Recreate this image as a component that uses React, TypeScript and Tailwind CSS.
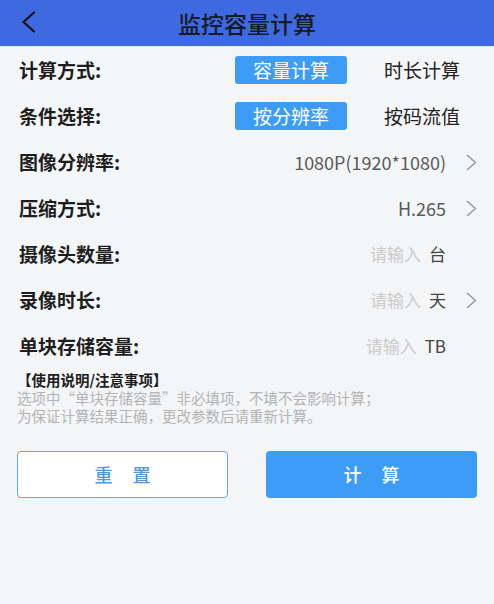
import React from "react";

const Chevron = () => (
  <svg width="11" height="17" viewBox="0 0 11 17" fill="none">
    <path d="M1.5 1.5 L9.5 8.5 L1.5 15.5" stroke="#9a9a9a" strokeWidth="1.6" strokeLinecap="round" strokeLinejoin="round" />
  </svg>
);

const Row = ({ label, children }: { label: string; children: React.ReactNode }) => (
  <div className="flex h-[46px] items-center justify-between pl-[19px] pr-[17px]">
    <span className="text-[19px] font-bold text-[#1e1e1e]">{label}</span>
    <div className="flex items-center">{children}</div>
  </div>
);

const Value = ({ text, arrow }: { text: string; arrow: boolean }) => (
  <>
    <span className="text-[18px] text-[#5a5a5a]">{text}</span>
    <span className="ml-[20px] flex w-[11px] items-center">{arrow ? <Chevron /> : null}</span>
  </>
);

const InputVal = ({ unit, arrow }: { unit: string; arrow: boolean }) => (
  <>
    <span className="text-[17px] text-[#cbcbcb]">请输入</span>
    <span className="ml-[8px] text-[17px] text-[#444]">{unit}</span>
    <span className="ml-[20px] flex w-[11px] items-center">{arrow ? <Chevron /> : null}</span>
  </>
);

const Toggle = ({ a, b }: { a: string; b: string }) => (
  <div className="flex items-center gap-[19px] -mr-[1px]">
    <div className="flex h-[28px] w-[112px] items-center justify-center rounded-[3px] bg-[#3c9cf6] text-[19px] text-white">
      {a}
    </div>
    <div className="flex h-[28px] w-[112px] items-center justify-center text-[19px] text-[#222]">{b}</div>
  </div>
);

export default function App() {
  return (
    <div
      className="min-h-[604px] w-[494px] bg-[#f3f5f7]"
      style={{ fontFamily: '"Noto Sans CJK SC", "Noto Sans", sans-serif' }}
    >
      <div className="relative flex h-[46px] items-center justify-center bg-[#3f69de]">
        <svg className="absolute left-[21px] top-[11px]" width="16" height="22" viewBox="0 0 16 22" fill="none">
          <path d="M13 1.5 L2.5 11 L13 20.5" stroke="#111" strokeWidth="2.2" strokeLinecap="round" strokeLinejoin="round" />
        </svg>
        <span className="text-[23px] font-medium text-[#141a2a]">监控容量计算</span>
      </div>
      <div className="border-t border-[#dfe6f6] h-0" />
      <div className="flex flex-col">
        <Row label="计算方式:">
          <Toggle a="容量计算" b="时长计算" />
        </Row>
        <Row label="条件选择:">
          <Toggle a="按分辨率" b="按码流值" />
        </Row>
        <Row label="图像分辨率:">
          <Value text="1080P(1920*1080)" arrow />
        </Row>
        <Row label="压缩方式:">
          <Value text="H.265" arrow />
        </Row>
        <Row label="摄像头数量:">
          <InputVal unit="台" arrow={false} />
        </Row>
        <Row label="录像时长:">
          <InputVal unit="天" arrow />
        </Row>
        <Row label="单块存储容量:">
          <InputVal unit="TB" arrow={false} />
        </Row>
      </div>
      <div className="mt-[2px] px-[17px] text-[14.5px] leading-[18px]">
        <div className="font-bold text-[#1e1e1e]">【使用说明/注意事项】</div>
        <div className="text-[#b4b4b4]">选项中“单块存储容量”非必填项，不填不会影响计算；</div>
        <div className="text-[#b4b4b4]">为保证计算结果正确，更改参数后请重新计算。</div>
      </div>
      <div className="mt-[26px] flex justify-between px-[17px]">
        <button className="flex h-[47px] w-[211px] items-center justify-center rounded-[4px] border-[1.5px] border-[#5ea8e8] bg-white text-[18px] font-medium text-[#5298d8]">
          <span className="tracking-[20px] -mr-[20px]">重置</span>
        </button>
        <button className="flex h-[47px] w-[211px] items-center justify-center rounded-[4px] bg-[#3c9cf6] text-[18px] font-medium text-white">
          <span className="tracking-[20px] -mr-[20px]">计算</span>
        </button>
      </div>
    </div>
  );
}
